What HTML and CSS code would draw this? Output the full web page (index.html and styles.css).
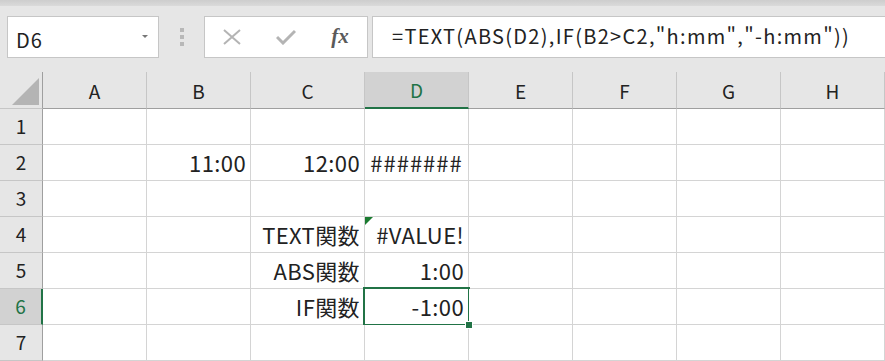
FILE: index.html
```html
<!DOCTYPE html>
<html lang="ja">
<head>
    <meta charset="UTF-8">
    <title>TEXT関数</title>
    <link rel="stylesheet" href="styles.css">
</head>
<body>
    <div class="top-strip"></div>

    <!-- name box + formula bar -->
    <div class="formula-bar">
        <div class="name-box">
            <span>D6</span>
            <span class="arrow"></span>
        </div>
        <div class="grip"><i></i><i></i><i></i></div>
        <div class="buttons">
            <span class="slot">
                <svg width="18" height="16" viewBox="0 0 18 16"><path d="M1 1 L17 15 M17 1 L1 15" stroke="#b4b4b4" stroke-width="2" fill="none"/></svg>
            </span>
            <span class="slot">
                <svg width="20" height="16" viewBox="0 0 20 16"><path d="M1 8 L7 14 L19 2" stroke="#b4b4b4" stroke-width="3" fill="none"/></svg>
            </span>
            <span class="slot fx">fx</span>
        </div>
        <div class="formula">=TEXT(ABS(D2),IF(B2&gt;C2,"h:mm","-h:mm"))</div>
    </div>

    <!-- sheet -->
    <div class="sheet">
        <div class="corner"><div class="corner-tri"></div></div>
        <div class="ch">A</div>
        <div class="ch">B</div>
        <div class="ch">C</div>
        <div class="ch active">D</div>
        <div class="ch">E</div>
        <div class="ch">F</div>
        <div class="ch">G</div>
        <div class="ch">H</div>

        <div class="rh">1</div>
        <div class="c"></div><div class="c"></div><div class="c"></div><div class="c"></div>
        <div class="c"></div><div class="c"></div><div class="c"></div><div class="c"></div>

        <div class="rh">2</div>
        <div class="c"></div>
        <div class="c">11:00</div>
        <div class="c">12:00</div>
        <div class="c center">#######</div>
        <div class="c"></div><div class="c"></div><div class="c"></div><div class="c"></div>

        <div class="rh">3</div>
        <div class="c"></div><div class="c"></div><div class="c"></div><div class="c"></div>
        <div class="c"></div><div class="c"></div><div class="c"></div><div class="c"></div>

        <div class="rh">4</div>
        <div class="c"></div>
        <div class="c"></div>
        <div class="c">TEXT関数</div>
        <div class="c warn">#VALUE!</div>
        <div class="c"></div><div class="c"></div><div class="c"></div><div class="c"></div>

        <div class="rh">5</div>
        <div class="c"></div>
        <div class="c"></div>
        <div class="c">ABS関数</div>
        <div class="c">1:00</div>
        <div class="c"></div><div class="c"></div><div class="c"></div><div class="c"></div>

        <div class="rh active">6</div>
        <div class="c"></div>
        <div class="c"></div>
        <div class="c">IF関数</div>
        <div class="c sel">-1:00<span class="handle"></span></div>
        <div class="c"></div><div class="c"></div><div class="c"></div><div class="c"></div>

        <div class="rh">7</div>
        <div class="c"></div><div class="c"></div><div class="c"></div><div class="c"></div>
        <div class="c"></div><div class="c"></div><div class="c"></div><div class="c"></div>
    </div>
</body>
</html>
```

FILE: styles.css
```css
body {
    margin: 0;
    width: 885px;
    height: 361px;
    overflow: hidden;
    background: #e6e6e6;
    font-family: "Noto Sans CJK JP", "Noto Sans", sans-serif;
    color: #222;
}

.top-strip {
    height: 6px;
    background: linear-gradient(#cdcdcd, #dadada);
}

/* formula bar */
.formula-bar {
    display: flex;
    height: 42px;
    margin-top: 10px;
}
.name-box {
    width: 152px;
    margin-left: 7px;
    box-sizing: border-box;
    background: #fff;
    border: 1px solid #c6c6c6;
    display: flex;
    align-items: center;
    justify-content: space-between;
    padding: 4px 10px 0 8px;
    font-size: 20px;
    letter-spacing: 1px;
}
.arrow {
    width: 0;
    height: 0;
    border-left: 3px solid transparent;
    border-right: 3px solid transparent;
    border-top: 3px solid #777;
    margin-top: -6px;
}
.grip {
    width: 45px;
    display: flex;
    flex-direction: column;
    align-items: center;
    justify-content: center;
    gap: 3px;
}
.grip i {
    width: 4px;
    height: 4px;
    background: #b8b8b8;
}
.buttons {
    width: 164px;
    box-sizing: border-box;
    background: #fff;
    border: 1px solid #c6c6c6;
    display: flex;
    align-items: center;
}
.slot {
    width: 54px;
    display: flex;
    justify-content: center;
}
.fx {
    font-family: "Liberation Serif", serif;
    font-style: italic;
    font-weight: bold;
    font-size: 21px;
    color: #5a5a5a;
    margin-top: -2px;
}
.formula {
    flex: 1;
    margin-left: 4px;
    margin-right: -2px;
    background: #fff;
    border: 1px solid #c6c6c6;
    padding: 4px 0 0 19px;
    font-size: 20px;
    letter-spacing: 1.3px;
    white-space: nowrap;
}

/* sheet grid */
.sheet {
    margin-top: 14px;
    display: grid;
    grid-template-columns: 43px 104px 104px 114px 104px 104px 104px 104px 104px;
    grid-template-rows: 37px repeat(7, 36px);
}
.corner {
    border-right: 1px solid #9f9f9f;
    border-bottom: 1px solid #c6c6c6;
    display: flex;
    justify-content: flex-end;
    align-items: flex-end;
    padding: 0 3px 3px 0;
}
.corner-tri {
    width: 27px;
    height: 27px;
    background: #b4b4b4;
    clip-path: polygon(100% 0, 100% 100%, 0 100%);
}
.ch {
    border-right: 1px solid #c6c6c6;
    border-bottom: 1px solid #9f9f9f;
    display: flex;
    align-items: center;
    justify-content: center;
    font-size: 19px;
}
.ch.active {
    background: #d2d2d2;
    border-bottom: 2px solid #217346;
    color: #217346;
}
.rh {
    border-right: 1px solid #9f9f9f;
    border-bottom: 1px solid #c6c6c6;
    display: flex;
    align-items: center;
    justify-content: center;
    font-size: 19px;
    padding-bottom: 2px;
}
.rh.active {
    background: #d2d2d2;
    border-right: 2px solid #217346;
    color: #217346;
}
.c {
    position: relative;
    background: #fff;
    border-right: 1px solid #d4d4d4;
    border-bottom: 1px solid #d4d4d4;
    display: flex;
    align-items: flex-end;
    justify-content: flex-end;
    padding: 0 4px 5px 0;
    font-size: 22px;
    letter-spacing: 0.4px;
    line-height: 1.2;
    white-space: nowrap;
}
.c.center {
    justify-content: center;
    padding-right: 0;
    letter-spacing: 1px;
}
.warn::before {
    content: "";
    position: absolute;
    left: 0;
    top: 0;
    border-top: 8px solid #1a7b30;
    border-right: 8px solid transparent;
}
.sel::after {
    content: "";
    position: absolute;
    left: -2px;
    top: -2px;
    right: -2px;
    bottom: -2px;
    border: 2px solid #217346;
}
.handle {
    position: absolute;
    right: -5px;
    bottom: -5px;
    width: 6px;
    height: 6px;
    background: #217346;
    border: 1px solid #fff;
    z-index: 1;
}
```
